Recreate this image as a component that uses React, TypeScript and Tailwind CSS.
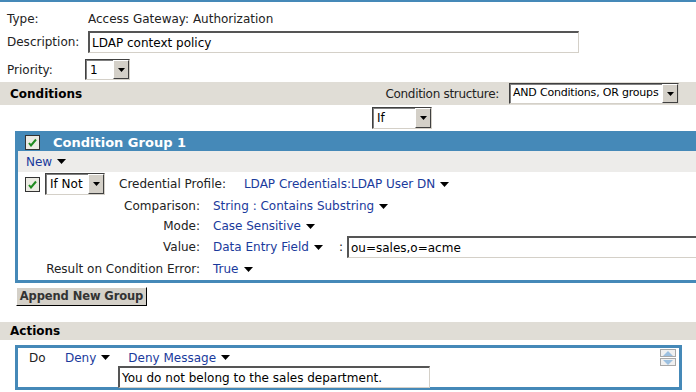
import React from "react";

const font = { fontFamily: '"DejaVu Sans", Verdana, sans-serif' };

const Tri = ({ color = "#000" }: { color?: string }) => (
  <svg width="9" height="5" viewBox="0 0 9 5" className="inline-block ml-[5px]">
    <path d="M0 0H9L4.5 5Z" fill={color} />
  </svg>
);

const Check = () => (
  <span className="inline-flex w-[15px] h-[15px] border border-[#333] bg-[#ecebe3] items-center justify-center">
    <svg width="9" height="9" viewBox="0 0 9 9">
      <path d="M1 5L3 7.5L8 1.5" stroke="#1f8a1f" strokeWidth="2" fill="none" />
    </svg>
  </span>
);

const Select = ({ value, w, h = 21, small }: { value: string; w: number; h?: number; small?: boolean }) => (
  <div
    className="flex items-center bg-white border border-t-[#404040] border-l-[#404040] border-b-[#d4d0c8] border-r-[#d4d0c8] shadow-[inset_1px_1px_0_#808080]"
    style={{ width: w, height: h }}
  >
    <span
      className={
        small
          ? "flex-1 pl-[3px] text-[11px] tracking-[-0.2px] text-black whitespace-nowrap overflow-hidden"
          : "flex-1 pl-[4px] text-[12px] text-black whitespace-nowrap overflow-hidden"
      }
    >
      {value}
    </span>
    <span className="w-[16px] h-full shrink-0 bg-[#d4d0c8] border border-t-white border-l-white border-b-[#404040] border-r-[#404040] flex items-center justify-center">
      <svg width="7" height="4" viewBox="0 0 7 4">
        <path d="M0 0H7L3.5 4Z" fill="#000" />
      </svg>
    </span>
  </div>
);

const Link = ({ children }: { children: React.ReactNode }) => (
  <span className="text-[#1a3a9c] whitespace-nowrap inline-flex items-center">
    {children}
    <Tri />
  </span>
);

const inputCls =
  "h-[22px] border-t-2 border-l-2 border-b border-r border-t-[#555] border-l-[#555] border-b-[#d4d0c8] border-r-[#d4d0c8] flex items-center pl-[2px] text-black whitespace-nowrap overflow-hidden";

export default function App() {
  return (
    <div className="w-[696px] h-[392px] overflow-hidden bg-white text-[12px] text-[#222]" style={font}>
      <div className="h-[2px] bg-[#4589b8]" />

      <div className="flex items-center h-[29px] pt-[4px] pl-[7px]">
        <span className="w-[81px]">Type:</span>
        <span>Access Gateway: Authorization</span>
      </div>

      <div className="flex items-center h-[22px] pl-[7px]">
        <span className="w-[81px]">Description:</span>
        <div className={`w-[491px] ${inputCls}`}>LDAP context policy</div>
      </div>

      <div className="flex items-center h-[29px] pl-[7px] pt-[6px] pb-[2px]">
        <span className="w-[78px]">Priority:</span>
        <Select value="1" w={45} />
      </div>

      <div className="flex items-center justify-between h-[23px] bg-[#e0ddd6] pl-[10px] pr-[17px]">
        <span className="font-bold text-black">Conditions</span>
        <div className="flex items-center">
          <span className="mr-[10px] tracking-[-0.3px]">Condition structure:</span>
          <Select value="AND Conditions, OR groups" w={170} h={21} small />
        </div>
      </div>

      <div className="flex h-[26px] pl-[372px] pt-[2px]">
        <Select value="If" w={60} h={22} />
      </div>

      <div className="ml-[15px] w-[700px] border-[3px] border-[#4589b8] border-r-0">
        <div className="flex items-center h-[17px] bg-[#4589b8] pl-[7px]">
          <Check />
          <span className="ml-[13px] text-white font-bold text-[13px]">Condition Group 1</span>
        </div>
        <div className="flex items-center h-[21px] bg-[#edecea] pl-[8px]">
          <Link>New</Link>
        </div>
        <div className="flex items-center h-[24px] pl-[7px]">
          <Check />
          <span className="ml-[5px]">
            <Select value="If Not" w={60} h={22} />
          </span>
          <span className="ml-[14px]">Credential Profile:</span>
          <span className="ml-[18px]">
            <Link>LDAP Credentials:LDAP User DN</Link>
          </span>
        </div>
        <div className="grid grid-cols-[182px_1fr] gap-x-[13px] items-center">
          <span className="text-right h-[20px] leading-[20px]">Comparison:</span>
          <Link>String : Contains Substring</Link>
          <span className="text-right h-[20px] leading-[20px]">Mode:</span>
          <Link>Case Sensitive</Link>
          <span className="text-right h-[22px] leading-[22px]">Value:</span>
          <div className="flex items-center h-[22px]">
            <Link>Data Entry Field</Link>
            <span className="ml-[16px] mr-[4px]">:</span>
            <div className={`flex-1 ${inputCls}`}>ou=sales,o=acme</div>
          </div>
          <span className="text-right h-[22px] leading-[22px]">Result on Condition Error:</span>
          <Link>True</Link>
        </div>
      </div>

      <div className="pl-[16px] pt-[4px]">
        <button
          className="w-[131px] h-[19px] bg-[#d4d0c8] border border-t-white border-l-white border-b-black border-r-black font-bold text-[#333] text-[11.5px] leading-none whitespace-nowrap tracking-[-0.1px]"
          style={font}
        >
          Append New Group
        </button>
      </div>

      <div className="mt-[16px] h-[18px] bg-[#e0ddd6] pl-[10px] flex items-center">
        <span className="font-bold text-black">Actions</span>
      </div>

      <div className="ml-[15px] mt-[5px] w-[667px] h-[45px] border-[3px] border-[#4589b8] flex">
        <div className="flex-1">
          <div className="flex items-center h-[18px] pt-[1px]">
            <span className="ml-[11px] w-[36px]">Do</span>
            <Link>Deny</Link>
            <span className="ml-[18px]">
              <Link>Deny Message</Link>
            </span>
          </div>
          <div className={`ml-[100px] w-[312px] ${inputCls}`}>You do not belong to the sales department.</div>
        </div>
        <div className="flex flex-col gap-[1px] pt-[1px] pr-[3px]">
          <span className="w-[16px] h-[8px] border border-[#a8a8a8] bg-[#f0f0f0] flex items-center justify-center">
            <svg width="10" height="5" viewBox="0 0 10 5"><path d="M0 5H10L5 0Z" fill="#9cc0e0" /></svg>
          </span>
          <span className="w-[16px] h-[8px] border border-[#a8a8a8] bg-[#f0f0f0] flex items-center justify-center">
            <svg width="10" height="5" viewBox="0 0 10 5"><path d="M0 0H10L5 5Z" fill="#9cc0e0" /></svg>
          </span>
        </div>
      </div>
    </div>
  );
}
